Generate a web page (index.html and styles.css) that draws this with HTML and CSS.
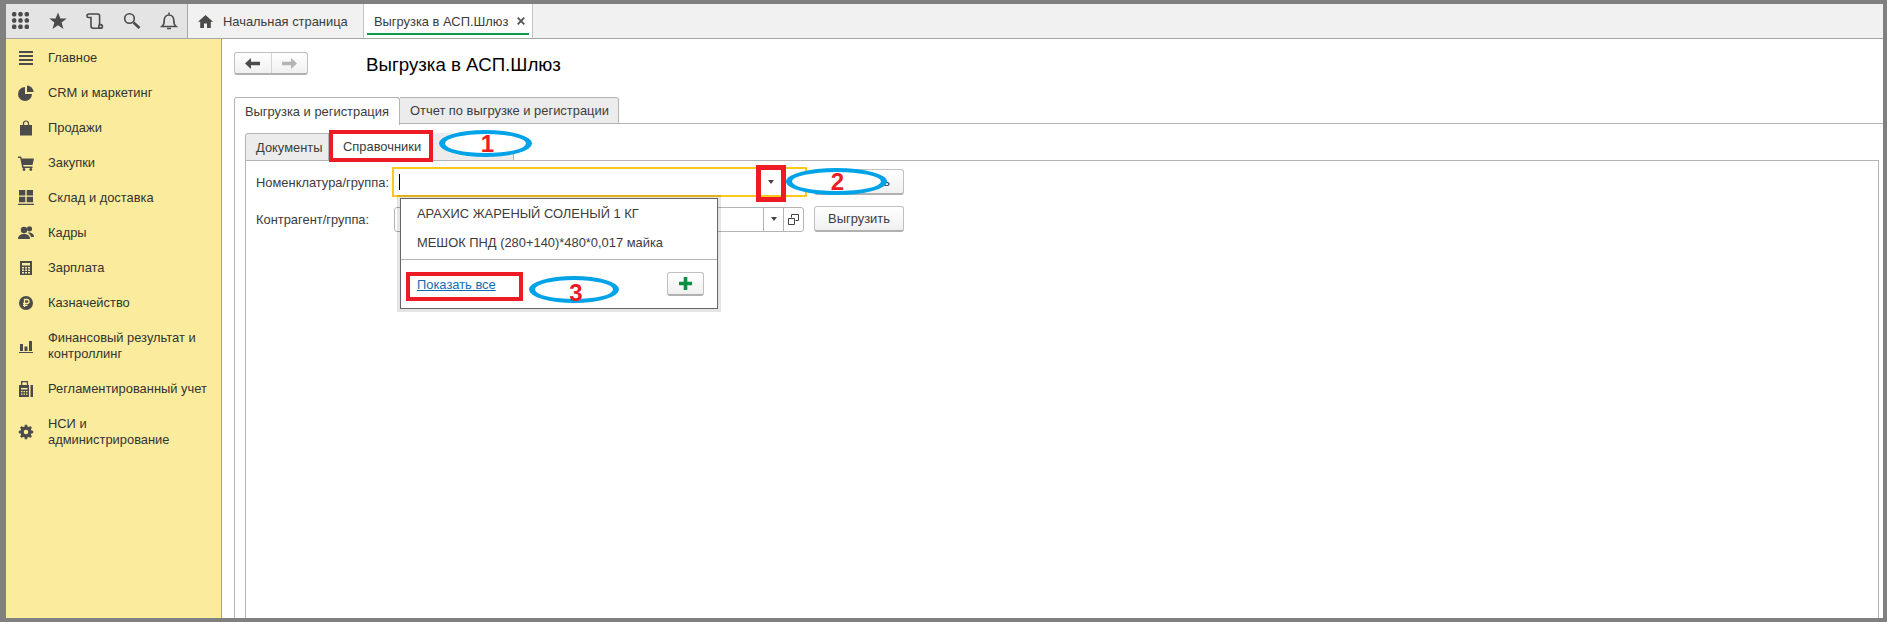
FILE: index.html
```html
<!DOCTYPE html>
<html lang="ru">
<head>
    <meta charset="UTF-8">
    <title>Выгрузка в АСП.Шлюз</title>
    <link rel="stylesheet" href="styles.css">
</head>
<body>
    <div class="window">
        <!-- Top bar -->
        <div class="topbar">
            <div class="tools">
                <svg class="tool" width="18" height="18" viewBox="0 0 18 18" fill="#4b4b4b">
                    <rect x="0" y="0" width="4.4" height="4.4" rx="1.6"/><rect x="6.3" y="0" width="4.4" height="4.4" rx="1.6"/><rect x="12.6" y="0" width="4.4" height="4.4" rx="1.6"/>
                    <rect x="0" y="6.3" width="4.4" height="4.4" rx="1.6"/><rect x="6.3" y="6.3" width="4.4" height="4.4" rx="1.6"/><rect x="12.6" y="6.3" width="4.4" height="4.4" rx="1.6"/>
                    <rect x="0" y="12.6" width="4.4" height="4.4" rx="1.6"/><rect x="6.3" y="12.6" width="4.4" height="4.4" rx="1.6"/><rect x="12.6" y="12.6" width="4.4" height="4.4" rx="1.6"/>
                </svg>
                <svg class="tool" width="18" height="18" viewBox="0 0 18 18" fill="#4b4b4b"><path d="M9 0.5l2.4 6h6.3l-5.1 3.9 1.9 6.6L9 13.2 3.5 17l1.9-6.6L.3 6.5h6.3z"/></svg>
                <svg class="tool" width="18" height="18" viewBox="0 0 18 18" fill="none" stroke="#4b4b4b" stroke-width="1.6"><path d="M3 2h9c1.2 0 1.6 1 1.6 2v9.5"/><path d="M3 2C1.6 2 1 3 1 4s.6 1.5 1.6 1.5H5V14c0 1.4.8 2.2 2 2.2h8"/><circle cx="14.6" cy="14.4" r="1.8"/></svg>
                <svg class="tool" width="18" height="18" viewBox="0 0 18 18" fill="none" stroke="#4b4b4b"><circle cx="6.5" cy="6.5" r="4.8" stroke-width="1.6"/><path d="M10.5 10.5l6 5.5" stroke-width="2.6"/></svg>
                <svg class="tool" width="18" height="18" viewBox="0 0 18 18" fill="none" stroke="#4b4b4b" stroke-width="1.6"><path d="M2 14.500c2-1.400 2.200-3 2.200-6 0-3 2-5.500 4.800-5.500s4.800 2.500 4.800 5.500c0 3 .2 4.600 2.200 6z"/><path d="M9 .5v2M7 16.500h4"/></svg>
            </div>
            <div class="home-tab">
                <svg width="15" height="13" viewBox="0 0 15 13" fill="#4b4b4b"><path d="M7.500 0L15 6.800h-2.200V13H9V8.500H6V13H2.200V6.800H0z"/></svg>
                <span>Начальная страница</span>
            </div>
            <div class="open-tab">
                <span>Выгрузка в АСП.Шлюз</span>
                <svg width="8" height="8" viewBox="0 0 8 8" stroke="#555" stroke-width="1.800"><path d="M.7.7l6.600 6.600M7.300.7L.7 7.300"/></svg>
            </div>
        </div>

        <div class="main">
            <!-- Section menu -->
            <ul class="sidebar">
                <li>
                    <svg width="16" height="16" viewBox="0 0 16 16" fill="#4b4b4b"><path d="M1 1h14v2H1zM1 5h14v2H1zM1 9h14v2H1zM1 13h14v2H1z"/></svg>
                    <span>Главное</span>
                </li>
                <li>
                    <svg width="16" height="16" viewBox="0 0 16 16" fill="#4b4b4b"><path d="M7 2a7 7 0 1 0 7 7H7z"/><path d="M9 .5A6.500 6.500 0 0 1 15.500 7H9z"/></svg>
                    <span>CRM и маркетинг</span>
                </li>
                <li>
                    <svg width="16" height="16" viewBox="0 0 16 16"><path d="M2 5h12v10.500H2z" fill="#4b4b4b"/><path d="M5.500 7V3.500a2.500 2.500 0 0 1 5 0V7" fill="none" stroke="#4b4b4b" stroke-width="1.200"/></svg>
                    <span>Продажи</span>
                </li>
                <li>
                    <svg width="16" height="16" viewBox="0 0 16 16" fill="#4b4b4b"><path d="M0 1.500h3l.8 2H16l-1.500 6.500H5.200l.3 1.500H14.500v1.400H4.300L2.200 2.900H0z"/><circle cx="6" cy="14.500" r="1.400"/><circle cx="12.800" cy="14.500" r="1.400"/></svg>
                    <span>Закупки</span>
                </li>
                <li>
                    <svg width="16" height="16" viewBox="0 0 16 16" fill="#4b4b4b"><path d="M1 0h6.300v5.500H1zM8.700 0H15v5.500H8.700zM1 6.800h6.300v5.500H1zM8.700 6.800H15v5.500H8.700zM0 13.800h16V15H0z"/></svg>
                    <span>Склад и доставка</span>
                </li>
                <li>
                    <svg width="16" height="16" viewBox="0 0 16 16" fill="#4b4b4b"><circle cx="6" cy="5" r="3.200"/><path d="M0 14c0-3.500 2.500-5 6-5s6 1.500 6 5z"/><circle cx="11.500" cy="3.800" r="2.600"/><path d="M9.500 7.500c3.500-.5 6.500 1 6.500 4.500h-3c-.5-2-1.800-3.300-3.500-4.500z"/></svg>
                    <span>Кадры</span>
                </li>
                <li>
                    <svg width="16" height="16" viewBox="0 0 16 16" fill="#4b4b4b"><path fill-rule="evenodd" d="M2 1h12v14H2zM4 3v2.500h8V3zM4 7v1.500h2V7zM7 7v1.500h2V7zM10 7v1.500h2V7zM4 9.500V11h2V9.500zM7 9.500V11h2V9.500zM10 9.500V11h2V9.500zM4 12v1.500h2V12zM7 12v1.500h2V12zM10 12v1.500h2V12z"/></svg>
                    <span>Зарплата</span>
                </li>
                <li>
                    <svg width="16" height="16" viewBox="0 0 16 16"><circle cx="8" cy="8" r="7" fill="#4b4b4b"/><path d="M6.500 12V4.500h2.500a2 2 0 0 1 0 4H5M5 10.300h4.500" fill="none" stroke="#fbec9d" stroke-width="1.300"/></svg>
                    <span>Казначейство</span>
                </li>
                <li class="tall">
                    <svg width="16" height="16" viewBox="0 0 16 16" fill="#4b4b4b"><path d="M2 6h3v7H2zM6.500 8.500h3V13h-3zM11 3h3v10h-3zM1 14h14v1H1z"/></svg>
                    <span>Финансовый результат и контроллинг</span>
                </li>
                <li>
                    <svg width="16" height="16" viewBox="0 0 16 16" fill="#4b4b4b"><path fill-rule="evenodd" d="M3 0h7v4h1v12H1V4h2zM4.300 1.300V4h4.500V1.300zM3 7v1.500h6.500V7zM3 10v1.300h1.500V10zM5.500 10v1.300H7V10zM8 10v1.300h1.500V10zM3 12.500v1.300h1.500v-1.300zM5.500 12.500v1.300H7v-1.300zM8 12.500v1.300h1.500v-1.300z"/><path d="M12.500 4H15v12h-2.500z"/></svg>
                    <span>Регламентированный учет</span>
                </li>
                <li class="tall">
                    <svg width="16" height="16" viewBox="0 0 16 16" fill="none" stroke="#4b4b4b"><circle cx="8" cy="8" r="4" stroke-width="3.400"/><path d="M8 .8v14.400M.8 8h14.400M2.900 2.900l10.200 10.200M13.100 2.900L2.900 13.100" stroke-width="2.600" stroke-dasharray="3 8.400"/></svg>
                    <span>НСИ и<br>администрирование</span>
                </li>
            </ul>

            <!-- Form -->
            <div class="content">
                <div class="form-head">
                    <div class="nav-buttons">
                        <div class="nav-btn">
                            <svg width="15" height="11" viewBox="0 0 15 11" fill="#4b4b4b"><path d="M6 0v3.800h9v3.400H6V11L0 5.500z"/></svg>
                        </div>
                        <div class="nav-btn">
                            <svg width="15" height="11" viewBox="0 0 15 11" fill="#b4b4b4"><path d="M9 0v3.800H0v3.400h9V11l6-5.500z"/></svg>
                        </div>
                    </div>
                    <h1 class="form-title">Выгрузка в АСП.Шлюз</h1>
                </div>

                <div class="tabs">
                    <div class="tab active">Выгрузка и регистрация</div>
                    <div class="tab">Отчет по выгрузке и регистрации</div>
                </div>

                <div class="tab-page">
                    <div class="subtabs">
                        <div class="subtab">Документы</div>
                        <div class="subtab current">Справочники</div>
                        <div class="subtab rest"></div>
                    </div>
                    <div class="subpage">
                        <div class="row">
                            <label class="field-label">Номенклатура/группа:</label>
                            <div class="field focused">
                                <span class="caret"></span>
                                <span class="field-btn"><i class="arrow"></i></span>
                            </div>
                            <button class="btn">Выгрузить</button>
                        </div>
                        <div class="row">
                            <label class="field-label">Контрагент/группа:</label>
                            <div class="field">
                                <span class="field-btn"><i class="arrow"></i></span>
                                <span class="field-btn">
                                    <svg width="13" height="13" viewBox="0 0 13 13" fill="none" stroke="#444"><path d="M4.500 4.500V1.500h7v6h-3"/><path d="M1.500 5.500h6v6h-6z"/></svg>
                                </span>
                            </div>
                            <button class="btn">Выгрузить</button>
                        </div>
                    </div>
                </div>
            </div>
        </div>

        <!-- Dropdown list -->
        <div class="popup">
            <div class="popup-item">АРАХИС ЖАРЕНЫЙ СОЛЕНЫЙ 1 КГ</div>
            <div class="popup-item">МЕШОК ПНД (280+140)*480*0,017 майка</div>
            <div class="popup-foot">
                <a class="show-all" href="#">Показать все</a>
                <button class="btn add-btn">
                    <svg width="13" height="13" viewBox="0 0 13 13" fill="#0b8f45"><path d="M4.700 0h3.600v4.700H13v3.600H8.300V13H4.700V8.300H0V4.700h4.700z"/></svg>
                </button>
            </div>
        </div>

        <!-- Annotations drawn on the screenshot -->
        <div class="mark mark-1"></div>
        <div class="mark mark-2"></div>
        <div class="mark mark-3"></div>
        <div class="oval oval-1">1</div>
        <div class="oval oval-2">2</div>
        <div class="oval oval-3">3</div>
    </div>
</body>
</html>
```

FILE: styles.css
```css
* {
    box-sizing: border-box;
}

html, body {
    margin: 0;
    height: 100%;
    overflow: hidden;
}

body {
    font-family: "Liberation Sans", Arial, sans-serif;
    font-size: 12.9px;
    color: #3c3c3c;
    background: #808080;
}

.window {
    position: relative;
    height: 622px;
    padding: 4px 4px 4px 6px;
    display: flex;
    flex-direction: column;
}

/* Top bar */
.topbar {
    height: 35px;
    flex: none;
    display: flex;
    background: #f1f1f1;
    border-bottom: 1px solid #a6a6a6;
}

.tools {
    width: 182px;
    padding-left: 6px;
    display: flex;
    align-items: center;
    gap: 19px;
    background: #e4e4e4;
    border-right: 1px solid #a6a6a6;
}

.home-tab {
    width: 176px;
    padding-left: 10px;
    display: flex;
    align-items: center;
    gap: 10px;
    border-right: 1px solid #c4c4c4;
}

.open-tab {
    position: relative;
    width: 169px;
    padding-left: 10px;
    display: flex;
    align-items: center;
    gap: 9px;
    background: #fff;
    border-right: 1px solid #c4c4c4;
}

.open-tab::after {
    content: "";
    position: absolute;
    left: 3px;
    right: 3px;
    bottom: 3px;
    height: 2px;
    background: #0b9a4e;
}

.main {
    flex: 1;
    display: flex;
    min-height: 0;
}

/* Section menu */
.sidebar {
    width: 216px;
    flex: none;
    margin: 0;
    padding: 1px 0 0;
    list-style: none;
    background: #fbec9d;
    border-right: 1px solid #bfa92c;
    color: #333;
}

.sidebar li {
    height: 35px;
    padding: 0 10px 0 12px;
    display: flex;
    align-items: center;
    gap: 14px;
    line-height: 16px;
}

.sidebar li.tall {
    height: 51px;
    padding-top: 1px;
}

.sidebar svg {
    flex: none;
}

/* Form */
.content {
    flex: 1;
    min-width: 0;
    padding: 13px 0 0 12px;
    display: flex;
    flex-direction: column;
    background: #fff;
}

.form-head {
    height: 45px;
    flex: none;
    display: flex;
}

.nav-buttons {
    width: 74px;
    height: 23px;
    display: flex;
    border: 1px solid #c0c0c0;
    border-bottom: 2px solid #b0b0b0;
    border-radius: 3px;
    background: linear-gradient(#fff, #f0f0f0);
}

.nav-btn {
    flex: 1;
    display: flex;
    align-items: center;
    justify-content: center;
}

.nav-btn + .nav-btn {
    border-left: 1px solid #d4d4d4;
}

.form-title {
    margin: 2px 0 0 58px;
    font-size: 18.7px;
    font-weight: normal;
    line-height: 22px;
    color: #000;
}

.tabs {
    height: 27px;
    flex: none;
    display: flex;
    position: relative;
    z-index: 1;
}

.tab {
    height: 27px;
    padding: 0 9px 0 10px;
    display: flex;
    align-items: center;
    background: #ececec;
    border: 1px solid #b4b4b4;
    border-left: 0;
    border-radius: 0 3px 0 0;
}

.tab.active {
    height: 28px;
    width: 166px;
    border-left: 1px solid #b4b4b4;
    border-bottom: 0;
    border-radius: 3px 3px 0 0;
    background: #fff;
}

.tab-page {
    flex: 1;
    padding: 9px 4px 0 10px;
    display: flex;
    flex-direction: column;
    border-top: 1px solid #b4b4b4;
    border-left: 1px solid #b4b4b4;
    margin-top: -1px;
    min-height: 0;
}

.subtabs {
    height: 27px;
    flex: none;
    display: flex;
    position: relative;
    z-index: 1;
}

.subtab {
    width: 84px;
    height: 27px;
    padding: 0 10px;
    display: flex;
    align-items: center;
    background: #ececec;
    border: 1px solid #b4b4b4;
    border-bottom: 0;
    border-radius: 3px 0 0 0;
}

.subtab.current {
    width: 103px;
    padding-left: 14px;
    border: 0;
    background: #fff;
}

.subtab.rest {
    width: 82px;
    border: 0;
    border-right: 1px solid #b4b4b4;
    border-radius: 0;
}

.subpage {
    flex: 1;
    padding: 7px 0 0 10px;
    display: flex;
    flex-direction: column;
    gap: 9px;
    border: 1px solid #b4b4b4;
    border-bottom: 0;
}

.row {
    height: 28px;
    display: flex;
    align-items: center;
}

.field-label {
    width: 137px;
    flex: none;
}

.field {
    width: 410px;
    height: 25px;
    margin-left: 1px;
    display: flex;
    justify-content: flex-end;
    border: 1px solid #b4b4b4;
    border-radius: 3px;
    background: #fff;
}

.field.focused {
    position: relative;
    width: 415px;
    height: 30px;
    margin-left: -1px;
    border: 2px solid #fbc81c;
    border-radius: 0;
    align-items: stretch;
}

.caret {
    position: absolute;
    left: 5px;
    top: 5px;
    width: 1px;
    height: 16px;
    background: #000;
}

.field-btn {
    width: 20px;
    display: flex;
    align-items: center;
    justify-content: center;
    border-left: 1px solid #b4b4b4;
}

.focused .field-btn {
    width: 44px;
    padding-right: 24px;
    border-left: 0;
    position: relative;
}

.arrow {
    width: 0;
    height: 0;
    border-left: 3px solid transparent;
    border-right: 3px solid transparent;
    border-top: 4px solid #444;
}

.btn {
    width: 90px;
    height: 26px;
    margin-left: 10px;
    padding: 0;
    font: inherit;
    color: #3c3c3c;
    background: linear-gradient(#fff, #f0f0f0);
    border: 1px solid #c0c0c0;
    border-bottom: 2px solid #b0b0b0;
    border-radius: 3px;
}

.focused + .btn {
    margin-left: 7px;
}

/* Dropdown list */
.popup {
    position: absolute;
    z-index: 2;
    left: 400px;
    top: 198px;
    width: 318px;
    height: 111px;
    display: flex;
    flex-direction: column;
    background: #fff;
    border: 1px solid #666;
    box-shadow: 0 0 0 3px rgba(0, 0, 0, 0.1);
}

.popup-item {
    height: 29px;
    padding-left: 16px;
    display: flex;
    align-items: center;
}

.popup-foot {
    flex: 1;
    margin-top: 2px;
    padding: 12px 13px 0 16px;
    display: flex;
    justify-content: space-between;
    border-top: 1px solid #b4b4b4;
}

.show-all {
    margin-top: 6px;
    color: #0e6fb5;
    line-height: 14px;
    align-self: flex-start;
}

.add-btn {
    width: 37px;
    height: 24px;
    margin: 0;
    display: flex;
    align-items: center;
    justify-content: center;
}

/* Annotations */
.mark {
    position: absolute;
    z-index: 3;
    border: 4px solid #ed1c24;
}

.mark-1 {
    left: 329px;
    top: 130px;
    width: 104px;
    height: 32px;
}

.mark-2 {
    left: 756px;
    top: 165px;
    width: 30px;
    height: 37px;
    border-width: 5px;
}

.mark-3 {
    left: 406px;
    top: 272px;
    width: 117px;
    height: 29px;
}

.oval {
    position: absolute;
    z-index: 3;
    padding-left: 4px;
    display: flex;
    align-items: center;
    justify-content: center;
    font-size: 24px;
    font-weight: bold;
    color: #ed1c24;
    background: #fff;
    border-style: solid;
    border-color: #00a2e8;
    border-width: 4px 6px;
    border-radius: 50%;
}

.oval-1 {
    left: 439px;
    top: 130px;
    width: 93px;
    height: 27px;
}

.oval-2 {
    left: 786px;
    top: 168px;
    width: 101px;
    height: 27px;
    padding-left: 2px;
}

.oval-3 {
    left: 529px;
    top: 276px;
    width: 90px;
    height: 27px;
    padding-top: 6px;
}
```
